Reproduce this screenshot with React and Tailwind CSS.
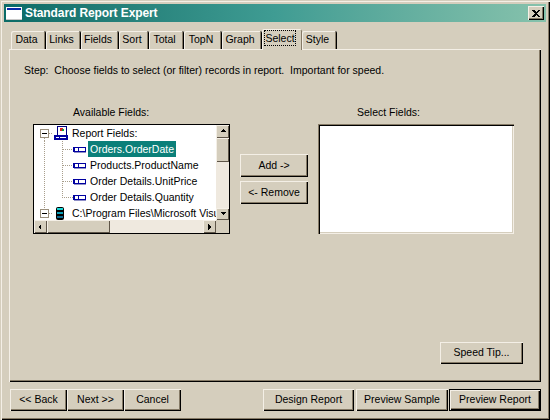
import React from 'react';

const raised = 'shadow-[inset_1px_1px_0_#f4efe6,inset_-1px_-1px_0_#000,inset_-2px_-2px_0_#857a66]';

function Button({ width, height = 'h-[22px]', children, className = '' }) {
    return (
        <button type="button" className={`flex items-center justify-center bg-[#d5cebd] text-[10.5px] text-black ${raised} ${width} ${height} ${className}`}>
            {children}
        </button>
    );
}

function Tab({ label, width, active }) {
    if (active) {
        return (
            <div className={`relative z-10 -mb-px flex h-[21px] items-start justify-center rounded-t-[2px] bg-[#d5cebd] pt-[2px] pr-[4px] shadow-[inset_1px_1px_0_#f4efe6,inset_-1px_0_0_#857a66] ${width}`}>
                <span className="leading-[14px] outline-1 outline-dotted outline-black">{label}</span>
            </div>
        );
    }
    return (
        <div className={`flex h-[18px] items-center justify-center rounded-t-[2px] border-r border-black bg-[#d5cebd] pr-[3px] pb-[1px] shadow-[inset_1px_1px_0_#f4efe6,inset_-1px_0_0_#857a66] ${width}`}>
            {label}
        </div>
    );
}

function FieldRow({ label, selected, last }) {
    return (
        <div className="flex h-4 items-center">
            <svg width="54" height="16" shapeRendering="crispEdges" className="shrink-0">
                <path d="M10.5 0V16" stroke="#a89e8c" strokeDasharray="1 1" />
                <path d={last ? 'M28.5 0V8.5H39' : 'M28.5 0V16M28.5 8.5H39'} stroke="#a89e8c" strokeDasharray="1 1" fill="none" />
                <rect x="39" y="6" width="13" height="5" fill="#0000a0" />
                <rect x="41" y="7" width="3" height="3" fill="#fff" />
                <rect x="45" y="7" width="6" height="3" fill="#fff" />
                <rect x="40" y="11" width="12" height="1" fill="#8f8fc8" />
            </svg>
            <span className={`h-4 px-[2px] leading-4 whitespace-nowrap ${selected ? 'bg-[#0b7f79] text-white' : ''}`}>{label}</span>
        </div>
    );
}

function MinusBox() {
    return (
        <>
            <rect x="6.5" y="4.5" width="8" height="8" fill="#fff" stroke="#9a8f7c" />
            <path d="M8 8.5H13" stroke="#000" />
            <path d="M15 8.5H19" stroke="#a89e8c" strokeDasharray="1 1" />
        </>
    );
}

function Arrow({ dir }) {
    const points = {
        up: '4,1 1,4 7,4',
        down: '1,2 7,2 4,5',
        left: '4,1 4,7 1,4',
        right: '2,1 2,7 5,4',
    }[dir];
    return (
        <svg width="8" height="8" viewBox="0 0 8 8" shapeRendering="crispEdges">
            <polygon points={points} fill="#000" />
        </svg>
    );
}

function ScrollButton({ dir, className = '' }) {
    return (
        <div className={`flex shrink-0 items-center justify-center bg-[#d5cebd] shadow-[inset_1px_1px_0_#f4efe6,inset_-1px_-1px_0_#5e5548] ${className}`}>
            <Arrow dir={dir} />
        </div>
    );
}

function TreeBox() {
    return (
        <div className="flex h-[110px] w-[197px] flex-col border border-black bg-white">
            <div className="flex h-[95px]">
                <div className="w-[182px] overflow-hidden text-black">
                    <div className="flex h-4 items-center">
                        <svg width="36" height="16" shapeRendering="crispEdges" className="shrink-0">
                            <path d="M10.5 13V16" stroke="#a89e8c" strokeDasharray="1 1" />
                            <MinusBox />
                            <rect x="23.5" y="1.5" width="9" height="9" fill="#fff" stroke="#000080" />
                            <rect x="26" y="3" width="3" height="3" fill="#e02020" />
                            <rect x="28" y="4" width="2" height="2" fill="#10a040" />
                            <rect x="20" y="10" width="14" height="5" fill="#0000a0" />
                            <rect x="22" y="12" width="3" height="1" fill="#fff" />
                            <rect x="26" y="12" width="6" height="1" fill="#fff" />
                        </svg>
                        <span className="px-[2px] leading-4 whitespace-nowrap">Report Fields:</span>
                    </div>
                    <FieldRow label="Orders.OrderDate" selected />
                    <FieldRow label="Products.ProductName" />
                    <FieldRow label="Order Details.UnitPrice" />
                    <FieldRow label="Order Details.Quantity" last />
                    <div className="flex h-4 items-center">
                        <svg width="36" height="16" shapeRendering="crispEdges" className="shrink-0">
                            <path d="M10.5 0V4" stroke="#a89e8c" strokeDasharray="1 1" />
                            <MinusBox />
                            <rect x="22" y="2" width="8" height="13" rx="2" fill="#000" shapeRendering="auto" />
                            <rect x="23" y="3" width="6" height="2" fill="#19d6d6" />
                            <rect x="23" y="7" width="6" height="2" fill="#0aa0b8" />
                            <rect x="23" y="11" width="6" height="2" fill="#0a6a90" />
                        </svg>
                        <span className="px-[2px] leading-4 whitespace-nowrap">C:\Program Files\Microsoft Visual Studio</span>
                    </div>
                </div>
                <div className="flex w-[13px] flex-col bg-[#efe9df]">
                    <ScrollButton dir="up" className="h-[13px]" />
                    <div className="h-[24px] shrink-0 bg-[#d5cebd] shadow-[inset_1px_1px_0_#f4efe6,inset_-1px_-1px_0_#5e5548]" />
                    <div className="flex-1" />
                    <ScrollButton dir="down" className="h-[12px]" />
                </div>
            </div>
            <div className="flex h-[13px] bg-[#efe9df]">
                <ScrollButton dir="left" className="w-[13px]" />
                <div className="w-[63px] shrink-0 bg-[#d5cebd] shadow-[inset_1px_1px_0_#f4efe6,inset_-1px_-1px_0_#5e5548]" />
                <div className="flex-1" />
                <ScrollButton dir="right" className="w-[13px]" />
                <div className="w-[13px] shrink-0 bg-[#d5cebd]" />
            </div>
        </div>
    );
}

export default function App() {
    const tabs = [
        ['Data', 'w-[35px]'],
        ['Links', 'w-[35px]'],
        ['Fields', 'w-[38px]'],
        ['Sort', 'w-[30px]'],
        ['Total', 'w-[35px]'],
        ['TopN', 'w-[38px]'],
        ['Graph', 'w-[40px]'],
        ['Select', 'w-[40px]', true],
        ['Style', 'w-[35px]'],
    ];

    return (
        <div className="flex h-[420px] w-[550px] flex-col overflow-hidden bg-[#d5cebd] px-1 pt-1 font-['Liberation_Sans',Arial,sans-serif] text-[10.5px] text-black shadow-[inset_1px_1px_0_#d5cebd,inset_2px_2px_0_#f4efe6,inset_-1px_-1px_0_#000,inset_-2px_-2px_0_#857a66]">
            <div className="flex h-[18px] shrink-0 items-center bg-gradient-to-r from-[#0a6b66] via-[#3f9c93] to-[#86c2ac] pr-[2px] pl-[2px]">
                <svg width="16" height="13" shapeRendering="crispEdges" className="shrink-0">
                    <rect x="0" y="0" width="16" height="13" fill="#fff" />
                    <rect x="1" y="1" width="14" height="2" fill="#0a2aa8" />
                    <rect x="0" y="12" width="16" height="1" fill="#c8c8c8" />
                </svg>
                <span className="ml-[3px] text-[12px] font-bold tracking-[-0.1px] text-white">Standard Report Expert</span>
                <div className={`ml-auto flex h-[14px] w-4 items-center justify-center bg-[#d5cebd] ${raised}`}>
                    <svg width="8" height="7" viewBox="0 0 8 7" shapeRendering="crispEdges">
                        <path d="M0 0H2L3 1L4 2L5 1L6 0H8L5 3.5L8 7H6L4 5L2 7H0L3 3.5Z" fill="#000" />
                    </svg>
                </div>
            </div>

            <div className="mt-[7px] flex h-[20px] shrink-0 items-end pl-[7px]">
                {tabs.map(([label, width, active]) => (
                    <Tab key={label} label={label} width={width} active={active} />
                ))}
            </div>

            <div className="mx-[5px] flex h-[333px] shrink-0 flex-col pt-[14px] pr-[18px] pb-[18px] pl-[15px] shadow-[inset_1px_1px_0_#f4efe6,inset_-1px_-1px_0_#000,inset_-2px_-2px_0_#857a66]">
                <p className="leading-[14px] whitespace-pre">Step:  Choose fields to select (or filter) records in report.  Important for speed.</p>

                <div className="mt-[28px] ml-[9px] flex gap-[10px]">
                    <div className="flex flex-col">
                        <span className="pl-[40px] leading-[14px]">Available Fields:</span>
                        <div className="mt-[5px]">
                            <TreeBox />
                        </div>
                    </div>
                    <div className="flex flex-col gap-1 pt-[49px]">
                        <Button width="w-[68px]" height="h-[23px]">Add -&gt;</Button>
                        <Button width="w-[68px]" height="h-[23px]">&lt;- Remove</Button>
                    </div>
                    <div className="flex flex-col">
                        <span className="pl-[39px] leading-[14px]">Select Fields:</span>
                        <div className="mt-[5px] h-[110px] w-[196px] bg-white shadow-[inset_1px_1px_0_#857a66,inset_2px_2px_0_#000,inset_-1px_-1px_0_#f4efe6,inset_-2px_-2px_0_#d5cebd]" />
                    </div>
                </div>

                <div className="mt-auto flex justify-end">
                    <Button width="w-[83px]">Speed Tip...</Button>
                </div>
            </div>

            <div className="mt-[7px] mr-[5px] ml-[6px] flex h-[22px] shrink-0 items-stretch">
                <Button width="w-[57px]">&lt;&lt; Back</Button>
                <Button width="w-[57px]">Next &gt;&gt;</Button>
                <Button width="w-[57px]">Cancel</Button>
                <Button width="w-[91px]" className="ml-auto">Design Report</Button>
                <Button width="w-[92px]" className="ml-[2px]">Preview Sample</Button>
                <button type="button" className={`ml-[1px] flex h-[22px] w-[92px] items-center justify-center border border-black bg-[#d5cebd] text-[10.5px] ${raised}`}>
                    Preview Report
                </button>
            </div>
        </div>
    );
}
